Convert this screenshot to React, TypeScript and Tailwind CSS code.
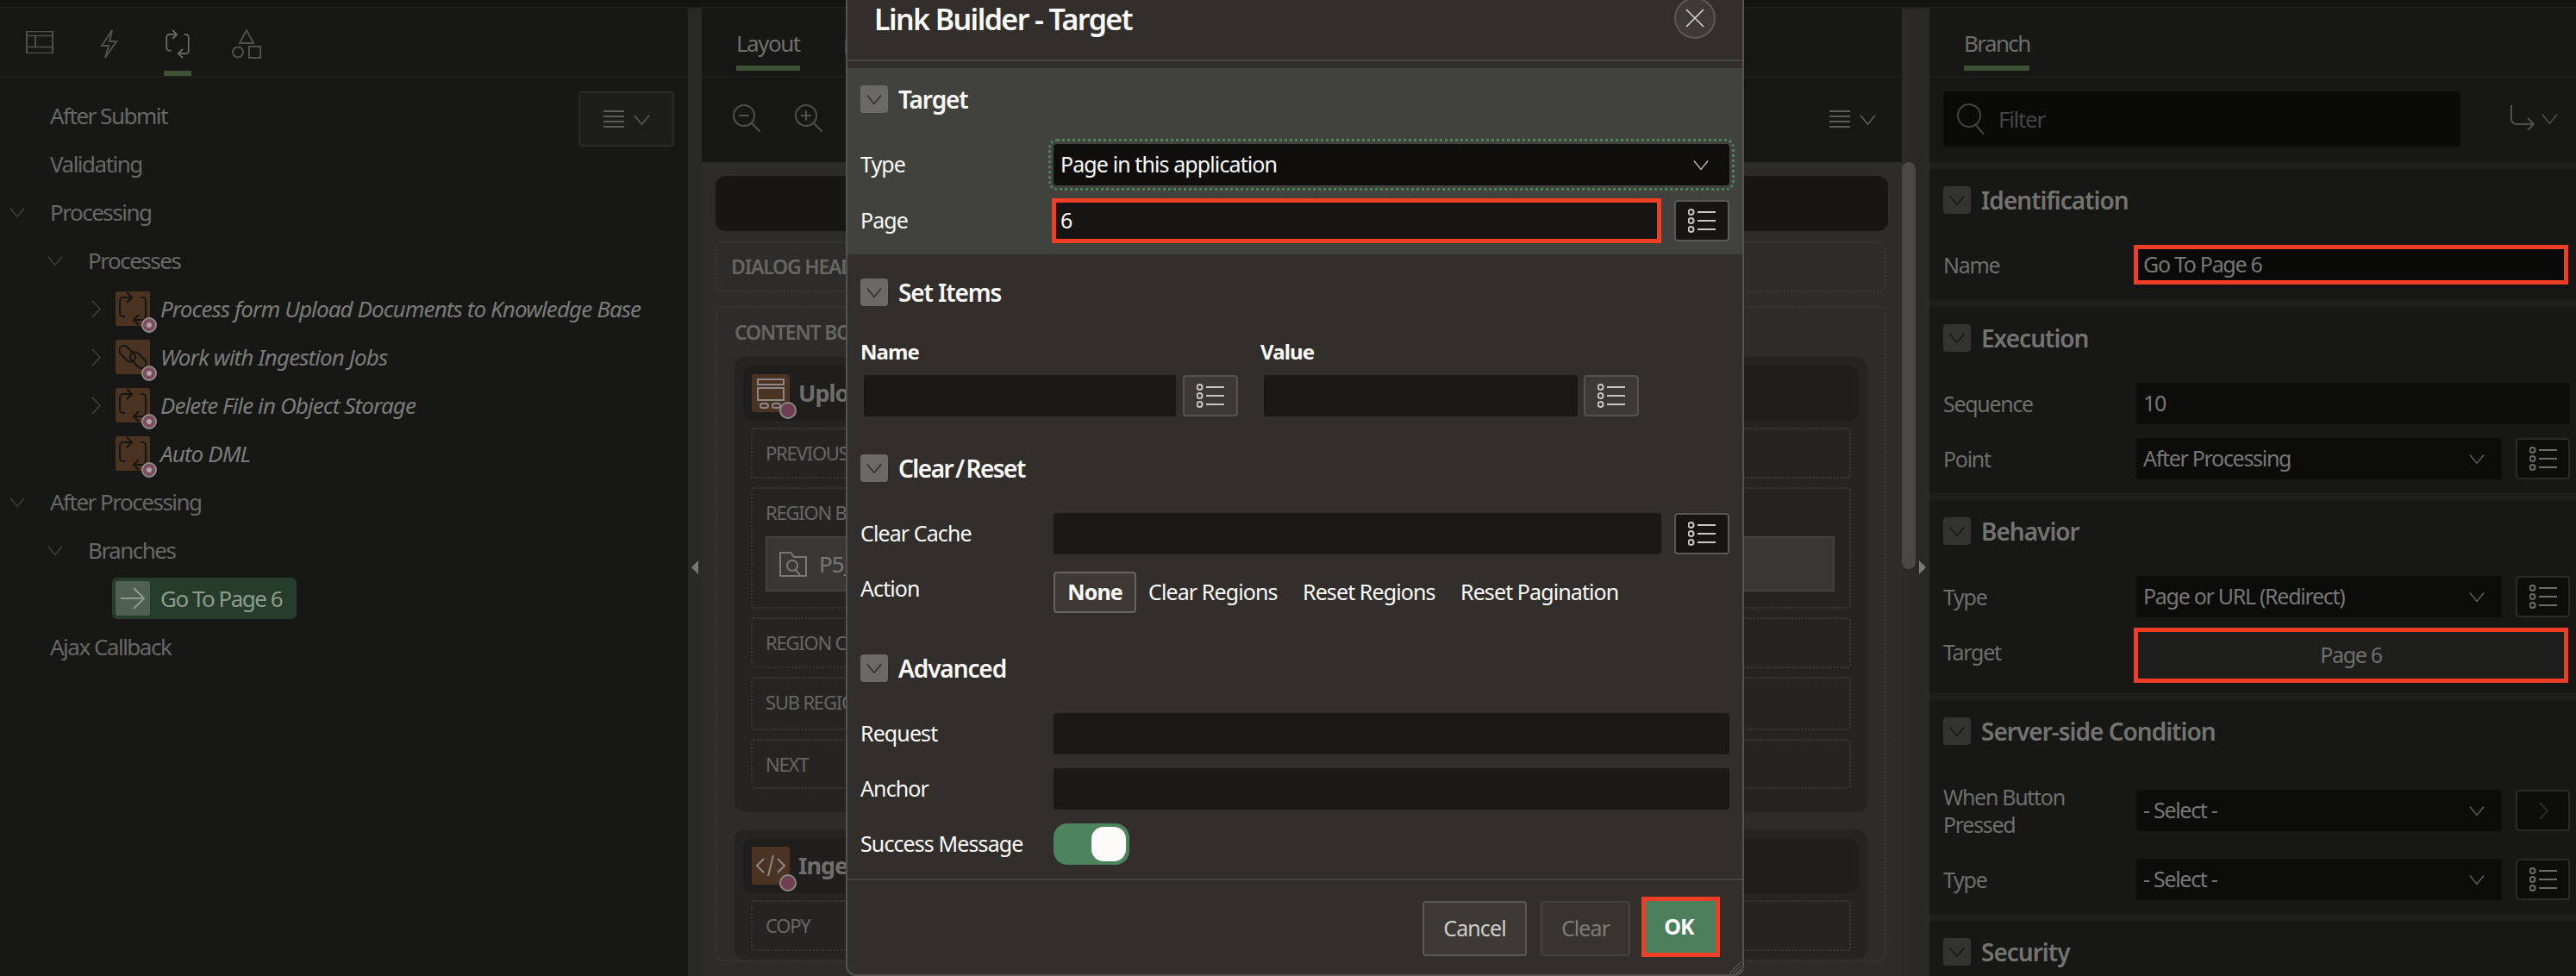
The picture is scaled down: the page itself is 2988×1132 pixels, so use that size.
const font = "font-['Noto_Sans',sans-serif]";

function Chev({ className = "", dir = "down" }: { className?: string; dir?: "down" | "right" }) {
  return (
    <svg viewBox="0 0 20 20" fill="none" stroke="currentColor" strokeWidth="1.6" className={className}>
      {dir === "down" ? <path d="M1 5l9 11 9-11" /> : <path d="M6 1l9 9.5-9 9.5" />}
    </svg>
  );
}

function ListIcon({ className = "" }: { className?: string }) {
  return (
    <svg viewBox="0 0 32 28" fill="none" stroke="currentColor" strokeWidth="2" className={className}>
      <circle cx="3.5" cy="4" r="3" />
      <circle cx="3.5" cy="14" r="3" />
      <circle cx="3.5" cy="24" r="3" />
      <path d="M11 4h21M11 14h21M11 24h21" />
    </svg>
  );
}

function Repeat({ className = "" }: { className?: string }) {
  return (
    <svg viewBox="0 0 32 40" fill="none" stroke="currentColor" strokeWidth="2" className={className}>
      <path d="M13 7H5a4 4 0 0 0-4 4v14a4 4 0 0 0 4 4h2M19 33h8a4 4 0 0 0 4-4V11a4 4 0 0 0-4-4h-2" />
      <path d="M9 1l6 6-6 6M23 27l-6 6 6 6" />
    </svg>
  );
}

function HamburgerChev({ color }: { color: string }) {
  return (
    <div className={`flex items-center gap-[11px] ${color}`}>
      <svg viewBox="0 0 24 20" className="w-6 h-5" fill="currentColor">
        <path d="M0 0h24v2H0zM0 6h24v2H0zM0 12h24v2H0zM0 18h24v2H0z" />
      </svg>
      <Chev className="w-[19px] h-[19px]" />
    </div>
  );
}

function TreeRow({ label, indent, italic, icon }: { label: string; indent: number; italic?: boolean; icon?: React.ReactNode }) {
  return (
    <div className="h-14 flex items-center relative" style={{ paddingLeft: indent }}>
      {icon}
      <span className={italic ? "italic text-[#7b7b79] tracking-[-0.9px]" : "text-[#686866]"}>{label}</span>
    </div>
  );
}

function ProcIcon({ link }: { link?: boolean }) {
  return (
    <div className="relative w-10 h-10 rounded-[3px] bg-[#4a3320] mr-3 flex items-center justify-center text-[#151413] shrink-0">
      {link ? (
        <svg viewBox="0 0 32 36" fill="none" stroke="currentColor" strokeWidth="2" className="w-8 h-9">
          <rect x="-1" y="9" width="22" height="11" rx="5.5" transform="rotate(45 10 14)" />
          <rect x="11" y="16" width="22" height="11" rx="5.5" transform="rotate(45 22 22)" />
        </svg>
      ) : (
        <Repeat className="w-8 h-10" />
      )}
      <div className="absolute right-[-8px] bottom-[-8px] w-[18px] h-[18px] rounded-full bg-[#7d4a5e] border-2 border-[#8e8c8a] flex items-center justify-center">
        <div className="w-[6px] h-[6px] rounded-full bg-[#a9a7a5]" />
      </div>
    </div>
  );
}

function LeftPanel() {
  return (
    <div className="w-[798px] shrink-0 bg-[#171715] flex flex-col">
      <div className="h-20 shrink-0 border-b-2 border-[#1f1f1d] relative flex items-start text-[#4f4f4d]">
        <svg viewBox="0 0 32 38" fill="none" stroke="currentColor" strokeWidth="2" className="absolute left-[30px] top-[26px] w-8 h-[26px]" preserveAspectRatio="none">
          <path d="M1 1h30v36H1zM1 8h30M11 8v19h20M1 27h10" />
        </svg>
        <svg viewBox="0 0 26 34" fill="none" stroke="currentColor" strokeWidth="2" className="absolute left-[113px] top-6 w-[26px] h-[34px]">
          <path d="M17 1L5 19h8l-4 14 13-19h-8z" />
        </svg>
        <Repeat className="absolute left-[190px] top-6 w-8 h-[34px] text-[#6e6e6c]" />
        <div className="absolute left-[190px] top-[72px] w-8 h-[6px] bg-[#3f5236]" />
        <svg viewBox="0 0 34 34" fill="none" stroke="currentColor" strokeWidth="2" className="absolute left-[269px] top-6 w-[34px] h-[34px]">
          <path d="M17 1l8 15H9zM20 20h13v13H20z" />
          <circle cx="7" cy="26.5" r="6" />
        </svg>
      </div>
      <div className="relative pt-[16px] text-[26px] leading-none tracking-[-1.5px]">
        <div className="absolute left-[671px] top-[16px] w-[111px] h-16 rounded bg-[#1d1d1b] border-2 border-[#2a2a28] flex items-center justify-center">
          <HamburgerChev color="text-[#5b5b59]" />
        </div>
        <TreeRow label="After Submit" indent={58} />
        <TreeRow label="Validating" indent={58} />
        <div className="relative">
          <Chev className="absolute left-[11px] top-[19px] w-[18px] h-[18px] text-[#3f3f3d]" />
          <TreeRow label="Processing" indent={58} />
        </div>
        <div className="relative">
          <Chev className="absolute left-[55px] top-[19px] w-[18px] h-[18px] text-[#3f3f3d]" />
          <TreeRow label="Processes" indent={102} />
        </div>
        {[
          { label: "Process form Upload Documents to Knowledge Base", more: true },
          { label: "Work with Ingestion Jobs", more: true, link: true },
          { label: "Delete File in Object Storage", more: true },
          { label: "Auto DML" },
        ].map((p) => (
          <div key={p.label} className="relative">
            {p.more && <Chev dir="right" className="absolute left-[101px] top-[18px] w-5 h-5 text-[#3f3f3d]" />}
            <TreeRow label={p.label} indent={134} italic icon={<ProcIcon link={p.link} />} />
          </div>
        ))}
        <div className="relative">
          <Chev className="absolute left-[11px] top-[19px] w-[18px] h-[18px] text-[#3f3f3d]" />
          <TreeRow label="After Processing" indent={58} />
        </div>
        <div className="relative">
          <Chev className="absolute left-[55px] top-[19px] w-[18px] h-[18px] text-[#3f3f3d]" />
          <TreeRow label="Branches" indent={102} />
        </div>
        <div className="h-14 flex items-center pl-[130px]">
          <div className="w-[214px] h-12 rounded-md bg-[#263d2c] flex items-center pl-1 text-[#8d9a90]">
            <div className="w-10 h-10 rounded-[3px] bg-[#4f5f52] mr-3 flex items-center justify-center">
              <svg viewBox="0 0 28 26" fill="none" stroke="#8d9a90" strokeWidth="2" className="w-7 h-[26px]">
                <path d="M0 13h27M15 1l12 12-12 12" />
              </svg>
            </div>
            Go To Page 6
          </div>
        </div>
        <TreeRow label="Ajax Callback" indent={58} />
      </div>
    </div>
  );
}

function Dotted({ label, className = "", children }: { label: string; className?: string; children?: React.ReactNode }) {
  return (
    <div className={`border-2 border-dotted border-[#3b3936] rounded-[3px] px-[15px] ${className}`}>
      <div className="h-[55px] flex items-center text-[22px] text-[#686663] tracking-[-1.2px]">{label}</div>
      {children}
    </div>
  );
}

function CanvasCard({ title, iconEl, children, className = "" }: { title: string; iconEl: React.ReactNode; children?: React.ReactNode; className?: string }) {
  return (
    <div className={`bg-[#262422] rounded-xl p-[10px] ${className}`}>
      <div className="h-16 rounded-xl bg-[#1f1e1c] flex items-center pl-[10px] mb-2">
        <div className="relative w-11 h-11 rounded-[3px] bg-[#4a3323] flex items-center justify-center text-[#8b8987] mr-[10px]">
          {iconEl}
          <div className="absolute right-[-6px] bottom-[-6px] w-4 h-4 rounded-full bg-[#6e3f52] ring-2 ring-[#8b8987]" />
        </div>
        <span className="w-[55px] overflow-hidden whitespace-nowrap font-bold text-[27px] text-[#706e6c] tracking-[-1px]">{title}</span>
      </div>
      <div className="flex flex-col gap-[10px] px-[9px]">{children}</div>
    </div>
  );
}

function CenterPanel() {
  return (
    <div className="w-[1392px] shrink-0 flex flex-col">
      <div className="h-20 shrink-0 bg-[#171715] border-b-2 border-[#1f1f1d] flex items-start pl-10 gap-[50px] text-[26px] text-[#6e6e6c] tracking-[-1.5px]">
        <div className="h-[72px] w-[74px] border-b-[6px] border-[#3f5236] flex items-center pt-[14px]">Layout</div>
        <div className="h-[72px] w-[3px] overflow-hidden whitespace-nowrap flex items-center pt-[14px]">Page Search</div>
      </div>
      <div className="h-[98px] shrink-0 bg-[#171715] relative text-[#4f4f4d]">
        <svg viewBox="0 0 32 32" fill="none" stroke="currentColor" strokeWidth="2" className="absolute left-9 top-[31px] w-8 h-8">
          <circle cx="13" cy="13" r="12" />
          <path d="M7 13h12M22 22l10 10" />
        </svg>
        <svg viewBox="0 0 32 32" fill="none" stroke="currentColor" strokeWidth="2" className="absolute left-[108px] top-[31px] w-8 h-8">
          <circle cx="13" cy="13" r="12" />
          <path d="M7 13h12M13 7v12M22 22l10 10" />
        </svg>
        <div className="absolute left-[1308px] top-[38px]">
          <HamburgerChev color="text-[#5b5b59]" />
        </div>
      </div>
      <div className="flex-1 bg-[#2e2c2a] px-4 pt-4 overflow-hidden">
        <div className="h-16 rounded-xl bg-[#171614] mb-3" />
        <div className="w-[1358px] h-[59px] border-2 border-dotted border-[#3b3936] rounded-lg px-4 mb-4 flex items-center text-[23px] font-semibold text-[#686663] tracking-[-1.2px]">
          DIALOG HEADER
        </div>
        <div className="w-[1358px] border-2 border-dotted border-[#3b3936] rounded-lg px-5">
          <div className="h-[57px] flex items-center text-[23px] font-semibold text-[#686663] tracking-[-1.2px]">CONTENT BODY</div>
          <CanvasCard
            title="Upload Documents"
            className="h-[528px] mb-5"
            iconEl={
              <svg viewBox="0 0 32 36" fill="none" stroke="currentColor" strokeWidth="2" className="w-8 h-9">
                <path d="M1 2h30v6H1zM1 12h30v14H1z" />
                <rect x="4" y="30" width="9" height="5" rx="2.5" />
                <rect x="18" y="30" width="9" height="5" rx="2.5" />
              </svg>
            }
          >
            <Dotted label="PREVIOUS" className="h-[59px]" />
            <Dotted label="REGION BODY" className="h-[141px]">
              <div className="h-16 w-[1240px] bg-[#3a3836] border-2 border-[#45433f] flex items-center pl-[14px] text-[26px] text-[#7a7876] tracking-[-1px]">
                <svg viewBox="0 0 32 32" fill="none" stroke="currentColor" strokeWidth="2" className="w-8 h-8 mr-[14px]">
                  <path d="M1 30V3h12l4 5h14v22z" />
                  <circle cx="15" cy="18" r="6" />
                  <path d="M19 23l5 6" />
                </svg>
                P5_FILE
              </div>
            </Dotted>
            <Dotted label="REGION CONTENT" className="h-[59px]" />
            <Dotted label="SUB REGIONS" className="h-[62px]" />
            <Dotted label="NEXT" className="h-[58px]" />
          </CanvasCard>
          <CanvasCard
            title="Ingestion Jobs"
            iconEl={
              <svg viewBox="0 0 34 26" fill="none" stroke="currentColor" strokeWidth="2" className="w-[34px] h-[26px]">
                <path d="M9 5l-8 8 8 8M25 5l8 8-8 8M20 1l-6 24" />
              </svg>
            }
          >
            <Dotted label="COPY" className="h-[59px]" />
          </CanvasCard>
        </div>
      </div>
    </div>
  );
}

function Toggle({ dialog }: { dialog?: boolean }) {
  return (
    <div className={`w-8 h-8 rounded flex items-center justify-center shrink-0 ${dialog ? "bg-[#6b6964] text-[#2e2c2a]" : "bg-[#333331] text-[#161614]"}`}>
      <Chev className="w-[18px] h-[18px]" />
    </div>
  );
}

function SideBtn({ disabled }: { disabled?: boolean }) {
  return (
    <div className="w-[63px] h-12 rounded bg-[#0d0d0c] border-2 border-[#2a2a28] flex items-center justify-center text-[#6c6c6a] shrink-0">
      {disabled ? <Chev dir="right" className="w-5 h-5 text-[#333331]" /> : <ListIcon className="w-8 h-7" />}
    </div>
  );
}

function Select({ text }: { text: string }) {
  return (
    <div className="w-[424px] h-12 rounded bg-[#0c0c0b] flex items-center justify-between pl-2 pr-5 text-[#777775]">
      {text}
      <Chev className="w-[18px] h-[18px] text-[#5e5e5c]" />
    </div>
  );
}

function PropSection({ title, pb, children }: { title: string; pb: string; children?: React.ReactNode }) {
  return (
    <div className={`shrink-0 pt-5 px-4 border-b-8 border-[#1f1f1d] ${pb}`}>
      <div className="h-8 flex items-center gap-3 font-semibold text-[28px] text-[#737371] tracking-[-1px] mb-9">
        <Toggle />
        {title}
      </div>
      <div className="flex flex-col gap-4">{children}</div>
    </div>
  );
}

function PropRow({ label, h = "h-12", labelClass = "", children }: { label: React.ReactNode; h?: string; labelClass?: string; children: React.ReactNode }) {
  return (
    <div className={`flex items-center ${h}`}>
      <div className={`w-[224px] shrink-0 text-[#6e6e6c] leading-8 ${labelClass}`}>{label}</div>
      <div className="flex items-center gap-4">{children}</div>
    </div>
  );
}

function RightPanel() {
  return (
    <div className="flex-1 bg-[#171715] flex flex-col overflow-hidden text-[25px] tracking-[-1.3px]">
      <div className="h-20 shrink-0 border-b-2 border-[#1f1f1d] pl-10 flex items-start text-[26px] text-[#6e6e6c] tracking-[-1.6px]">
        <div className="h-[72px] w-[76px] border-b-[6px] border-[#3f5236] flex items-center pt-[14px]">Branch</div>
      </div>
      <div className="h-[106px] shrink-0 border-b-8 border-[#1f1f1d] px-4 pt-4 flex items-start">
        <div className="w-[600px] h-16 rounded bg-[#0a0a09] flex items-center pl-4 text-[#454543] text-[26px]">
          <svg viewBox="0 0 32 36" fill="none" stroke="currentColor" strokeWidth="2" className="w-8 h-9 mr-4">
            <circle cx="14" cy="14" r="13" />
            <path d="M22 25l9 11" />
          </svg>
          Filter
        </div>
        <div className="ml-[58px] mt-4 flex items-center gap-2 text-[#4f4f4d]">
          <svg viewBox="0 0 28 30" fill="none" stroke="currentColor" strokeWidth="2" className="w-7 h-[30px]">
            <path d="M1 0v16a6 6 0 0 0 6 6h20M20 15l7 7-7 7" />
          </svg>
          <Chev className="w-[19px] h-[19px]" />
        </div>
      </div>
      <PropSection title="Identification" pb="pb-[18px]">
        <PropRow label="Name" h="h-[46px]">
          <div className="w-[504px] h-[46px] -ml-[3px] border-[5px] border-[#ee3f24] bg-[#0a0a09] flex items-center pl-[6px] text-[#777775]">Go To Page 6</div>
        </PropRow>
      </PropSection>
      <PropSection title="Execution" pb="pb-4">
        <PropRow label="Sequence">
          <div className="w-[503px] h-12 rounded bg-[#0c0c0b] flex items-center pl-2 text-[#777775]">10</div>
        </PropRow>
        <PropRow label="Point">
          <Select text="After Processing" />
          <SideBtn />
        </PropRow>
      </PropSection>
      <PropSection title="Behavior" pb="pb-3">
        <PropRow label="Type">
          <Select text="Page or URL (Redirect)" />
          <SideBtn />
        </PropRow>
        <div className="-mt-1">
          <PropRow label="Target" h="h-16" labelClass="pb-2">
            <div className="w-[504px] h-16 -ml-[3px] border-[5px] border-[#ee3f24] bg-[#1e1e1c] flex items-center justify-center text-[#6e6e6c]">Page 6</div>
          </PropRow>
        </div>
      </PropSection>
      <PropSection title="Server-side Condition" pb="pb-4">
        <PropRow label={<>When Button<br />Pressed</>} h="h-20">
          <Select text="- Select -" />
          <SideBtn disabled />
        </PropRow>
        <PropRow label="Type">
          <Select text="- Select -" />
          <SideBtn />
        </PropRow>
      </PropSection>
      <PropSection title="Security" pb="pb-4" />
    </div>
  );
}

function DialogBtn({ dark }: { dark?: boolean }) {
  return (
    <div className={`w-[64px] h-12 rounded border-2 flex items-center justify-center text-[#c9c7c4] shrink-0 ${dark ? "bg-[#161513] border-[#5a5854]" : "bg-[#3d3a36] border-[#55534f]"}`}>
      <ListIcon className="w-8 h-7" />
    </div>
  );
}

function DialogHead({ title, tight }: { title: string; tight?: boolean }) {
  return (
    <div className={`h-8 flex items-center gap-3 font-semibold text-[28px] text-[#fbfaf8] mb-9 ${tight ? "tracking-[-1.5px] [word-spacing:-3px]" : "tracking-[-1.1px]"}`}>
      <Toggle dialog />
      <span>{title}</span>
    </div>
  );
}

function DialogRow({ label, children }: { label: string; children: React.ReactNode }) {
  return (
    <div className="flex items-center min-h-12">
      <div className="w-[224px] shrink-0">{label}</div>
      {children}
    </div>
  );
}

function Modal() {
  return (
    <div className="absolute left-[981px] top-0 w-[1042px] h-[1132px] bg-[#312e2b] border-x-2 border-b-2 border-[#55524f] rounded-b-xl flex flex-col text-[25px] text-[#fbfaf8] tracking-[-0.9px] overflow-hidden">
      <div className="h-[71px] border-b-2 border-[#45433f] flex items-start justify-between pl-[31px] pr-[31px] shrink-0 mb-2">
        <div className="font-semibold text-[34px] leading-[44px] tracking-[-1.6px]">Link Builder - Target</div>
        <div className="w-12 h-12 -mt-[3px] rounded-full bg-[#3d3a37] border-2 border-[#5a5754] flex items-center justify-center text-[#d4d2cf]">
          <svg viewBox="0 0 24 24" fill="none" stroke="currentColor" strokeWidth="1.6" className="w-6 h-6">
            <path d="M2 2l20 20M22 2L2 22" />
          </svg>
        </div>
      </div>
      <div className="h-[216px] bg-[#41423d] pt-5 px-[15px] shrink-0">
        <DialogHead title="Target" />
        <DialogRow label="Type">
          <div className="outline-[3px] outline-dotted outline-offset-[3px] outline-[#4c825c] w-[784px] h-12 rounded bg-[#0f0e0c] flex items-center justify-between pl-2 pr-6">
            Page in this application
            <Chev className="w-[18px] h-[18px] text-[#b9b7b4]" />
          </div>
        </DialogRow>
        <div className="flex items-center mt-[15px]">
          <div className="w-[222px] shrink-0">Page</div>
          <div className="w-[707px] h-[52px] border-[5px] border-[#ee3f24] bg-[#161513] flex items-center pl-[5px]">6</div>
          <div className="ml-[15px]">
            <DialogBtn dark />
          </div>
        </div>
      </div>
      <div className="pt-7 px-[15px] h-[204px] shrink-0">
        <DialogHead title="Set Items" />
        <div className="flex font-bold text-[24px] -mt-[1px]">
          <div className="w-[464px]">Name</div>
          <div>Value</div>
        </div>
        <div className="flex items-center mt-[9px] pl-1">
          <div className="w-[362px] h-12 bg-[#1a1917] rounded-l" />
          <div className="ml-2">
            <DialogBtn />
          </div>
          <div className="w-[364px] h-12 bg-[#1a1917] rounded-l ml-[30px]" />
          <div className="ml-[7px]">
            <DialogBtn />
          </div>
        </div>
      </div>
      <div className="px-[15px] h-[232px] pt-7 shrink-0">
        <DialogHead title="Clear / Reset" tight />
        <DialogRow label="Clear Cache">
          <div className="w-[705px] h-12 bg-[#1a1917] rounded" />
          <div className="ml-[15px]">
            <DialogBtn dark />
          </div>
        </DialogRow>
        <div className="flex items-center mt-5">
          <div className="w-[224px] shrink-0 pb-2">Action</div>
          <div className="w-24 h-12 rounded border-2 border-[#67655f] bg-[#3d3a36] flex items-center justify-center font-bold">None</div>
          <div className="ml-[14px] w-[179px]">Clear Regions</div>
          <div className="w-[183px]">Reset Regions</div>
          <div>Reset Pagination</div>
        </div>
      </div>
      <div className="px-[15px] pt-7 shrink-0">
        <DialogHead title="Advanced" />
        <div className="flex flex-col gap-4">
          <DialogRow label="Request">
            <div className="w-[784px] h-12 bg-[#1a1917] rounded" />
          </DialogRow>
          <DialogRow label="Anchor">
            <div className="w-[784px] h-12 bg-[#1a1917] rounded" />
          </DialogRow>
          <DialogRow label="Success Message">
            <div className="w-[88px] h-12 rounded-2xl bg-[#4c825c] flex items-center justify-end pr-1">
              <div className="w-10 h-10 rounded-[14px] bg-[#fcfbfa]" />
            </div>
          </DialogRow>
        </div>
      </div>
      <div className="mt-4 border-t-2 border-[#45433f] flex-1 relative flex items-start justify-end pt-[24px] pr-[26px] gap-4">
        <div className="w-[121px] h-16 rounded border-2 border-[#5a5855] bg-[#3d3a36] flex items-center justify-center text-[#d0cecb]">Cancel</div>
        <div className="w-[104px] h-16 rounded border-2 border-[#45433f] bg-[#37342f] flex items-center justify-center text-[#7d7b78]">Clear</div>
        <div className="w-[91px] h-[70px] -mt-[5px] -ml-[3px] border-[5px] border-[#ee3f24] bg-[#4c7f5b] flex items-center justify-center font-bold text-white pr-1">OK</div>
        <svg viewBox="0 0 16 16" stroke="#6b6965" strokeWidth="1" className="absolute right-[1px] bottom-0 w-4 h-4">
          <path d="M2 15L15 2M6 15l9-9M10 15l5-5" />
        </svg>
      </div>
    </div>
  );
}

export default function App() {
  return (
    <div className={`relative w-[2988px] h-[1132px] overflow-hidden bg-[#171715] ${font}`}>
      <div className="h-[10px] bg-[#131312] border-b-2 border-[#1f1f1d]" />
      <div className="flex h-[1122px]">
        <LeftPanel />
        <div className="w-4 shrink-0 bg-[#292927] relative">
          <div className="absolute left-[4px] top-[640px] w-0 h-0 border-y-[8px] border-y-transparent border-r-[8px] border-r-[#7a7876]" />
        </div>
        <CenterPanel />
        <div className="w-4 shrink-0 bg-[#2c2a28] relative">
          <div className="absolute left-0 top-[178px] w-4 h-[472px] rounded-full bg-[#4b4846]" />
        </div>
        <div className="w-4 shrink-0 bg-[#292927] relative">
          <div className="absolute left-[4px] top-[640px] w-0 h-0 border-y-[8px] border-y-transparent border-l-[8px] border-l-[#7a7876]" />
        </div>
        <RightPanel />
      </div>
      <Modal />
    </div>
  );
}
